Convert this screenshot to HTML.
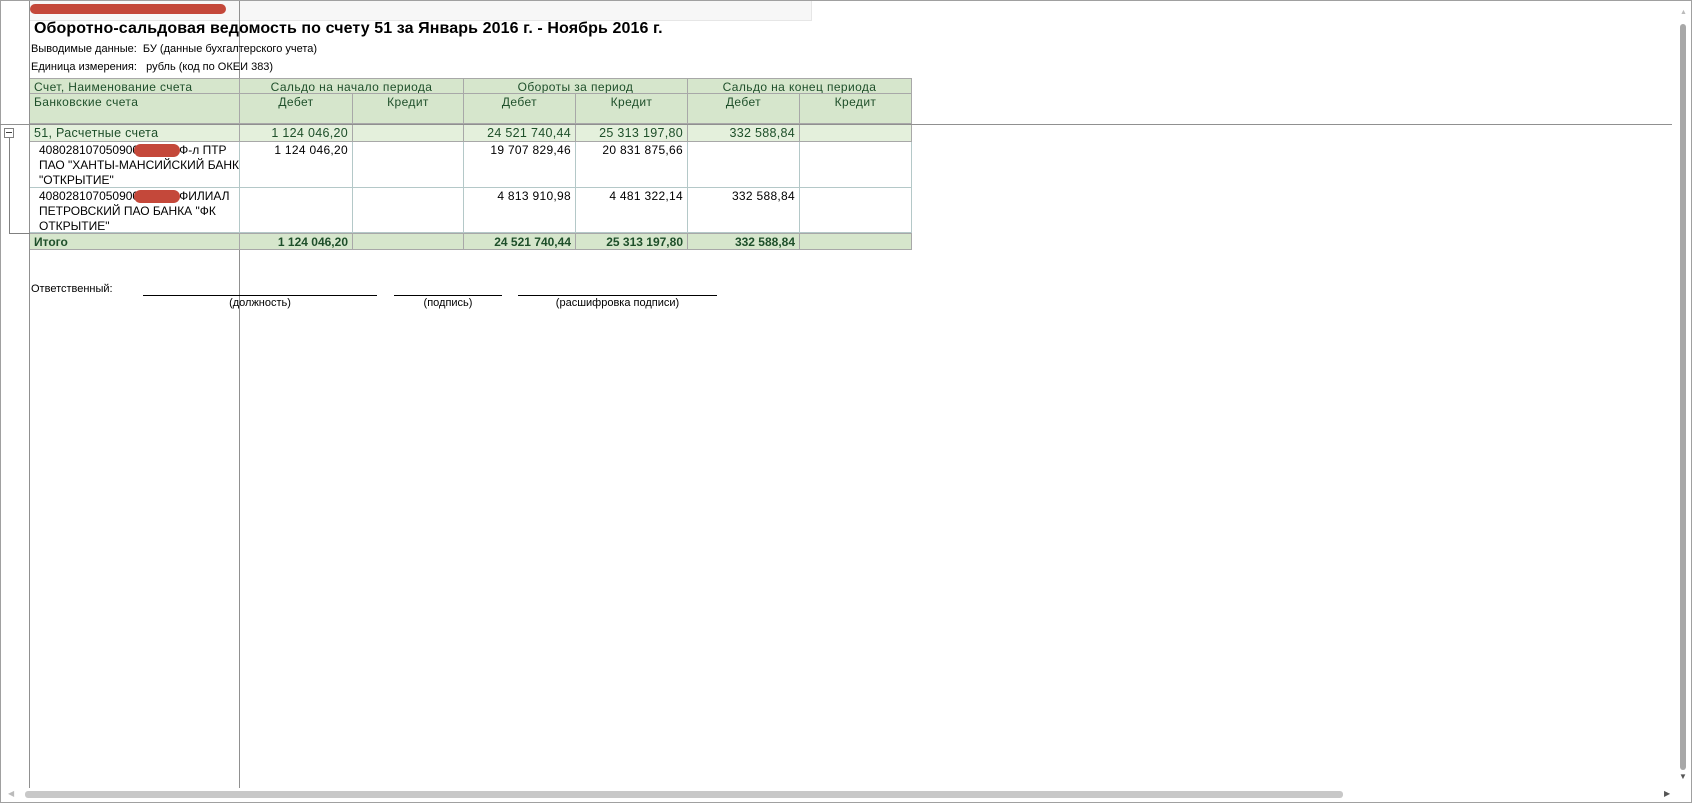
<!DOCTYPE html>
<html><head><meta charset="utf-8"><style>
*{margin:0;padding:0;box-sizing:border-box}
body{width:1692px;height:803px;overflow:hidden;background:#fff;font-family:"Liberation Sans",Arial,sans-serif;font-size:12px;color:#000;position:relative}
.a{position:absolute}
.c{position:absolute;white-space:nowrap;overflow:hidden;line-height:15px;padding:1px 4px}
.h{background:#d6e6cc;color:#1e4f2a;text-align:center;border-right:1px solid #a8a8a8;border-bottom:1px solid #a8a8a8;letter-spacing:0.4px}
.g{background:#e4f0dc;color:#1e4f2a;text-align:right;border-right:1px solid #a8a8a8;border-bottom:1px solid #a8a8a8;font-size:12.5px;letter-spacing:0.3px}
.d{text-align:right;border-right:1px solid #b4c8c8;border-bottom:1px solid #b4c8c8;height:46px;letter-spacing:0.3px}
.t{background:#d6e6cc;color:#1e4f2a;text-align:right;font-weight:bold;border-right:1px solid #a8a8a8;border-bottom:1px solid #a8a8a8;font-size:12px}
</style></head><body>
<div class="a" style="left:0;top:0;width:1692px;height:803px;border:1px solid #a0a0a0"></div>
<div class="a" style="left:29px;top:1px;width:783px;height:20px;background:#f7f7f7;border-bottom:1px solid #e6e6e6;border-right:1px solid #e6e6e6"></div>
<div class="a" style="left:30px;top:4px;width:196px;height:10px;background:#c4483a;border-radius:6px"></div>
<div class="a" style="left:29px;top:1px;width:1px;height:787px;background:#909090"></div>
<div class="a" style="left:239px;top:1px;width:1px;height:787px;background:#909090"></div>
<div class="a" style="left:0;top:124px;width:1672px;height:1px;background:#909090"></div>
<div class="a" style="left:34px;top:19px;font-size:16px;font-weight:bold;line-height:20px;letter-spacing:0.1px">Оборотно-сальдовая ведомость по счету 51 за Январь 2016 г. - Ноябрь 2016 г.</div>
<div class="a" style="left:31px;top:43px;font-size:11px">Выводимые данные:&nbsp; БУ (данные бухгалтерского учета)</div>
<div class="a" style="left:31px;top:61px;font-size:11px">Единица измерения:&nbsp;&nbsp; рубль (код по ОКЕИ 383)</div>

<div class="c h" style="left:30px;top:78px;width:210px;height:16px;text-align:left;border-top:1px solid #a8a8a8">Счет, Наименование счета</div>
<div class="c h" style="left:240px;top:78px;width:224px;height:16px;border-top:1px solid #a8a8a8">Сальдо на начало периода</div>
<div class="c h" style="left:464px;top:78px;width:224px;height:16px;border-top:1px solid #a8a8a8">Обороты за период</div>
<div class="c h" style="left:688px;top:78px;width:224px;height:16px;border-top:1px solid #a8a8a8">Сальдо на конец периода</div>
<div class="c h" style="left:30px;top:94px;width:210px;height:30px;text-align:left">Банковские счета</div>
<div class="c h" style="left:240px;top:94px;width:113px;height:30px">Дебет</div>
<div class="c h" style="left:353px;top:94px;width:111px;height:30px">Кредит</div>
<div class="c h" style="left:464px;top:94px;width:112px;height:30px">Дебет</div>
<div class="c h" style="left:576px;top:94px;width:112px;height:30px">Кредит</div>
<div class="c h" style="left:688px;top:94px;width:112px;height:30px">Дебет</div>
<div class="c h" style="left:800px;top:94px;width:112px;height:30px">Кредит</div>

<div class="c g" style="left:30px;top:125px;width:210px;height:17px;text-align:left">51, Расчетные счета</div>
<div class="c g" style="left:240px;top:125px;width:113px;height:17px">1 124 046,20</div>
<div class="c g" style="left:353px;top:125px;width:111px;height:17px"></div>
<div class="c g" style="left:464px;top:125px;width:112px;height:17px">24 521 740,44</div>
<div class="c g" style="left:576px;top:125px;width:112px;height:17px">25 313 197,80</div>
<div class="c g" style="left:688px;top:125px;width:112px;height:17px">332 588,84</div>
<div class="c g" style="left:800px;top:125px;width:112px;height:17px"></div>

<div class="c d" style="left:30px;top:142px;width:210px;text-align:left;padding-left:9px;letter-spacing:0">40802810705090000000, Ф-л ПТР<br>ПАО "ХАНТЫ-МАНСИЙСКИЙ БАНК<br>"ОТКРЫТИЕ"</div>
<div class="a" style="left:134px;top:144px;width:46px;height:13px;background:#c4483a;border-radius:7px"></div>
<div class="c d" style="left:240px;top:142px;width:113px">1 124 046,20</div>
<div class="c d" style="left:353px;top:142px;width:111px"></div>
<div class="c d" style="left:464px;top:142px;width:112px">19 707 829,46</div>
<div class="c d" style="left:576px;top:142px;width:112px">20 831 875,66</div>
<div class="c d" style="left:688px;top:142px;width:112px"></div>
<div class="c d" style="left:800px;top:142px;width:112px"></div>

<div class="c d" style="left:30px;top:188px;width:210px;height:45px;text-align:left;padding-left:9px;letter-spacing:0">40802810705090000000, ФИЛИАЛ<br>ПЕТРОВСКИЙ ПАО БАНКА "ФК<br>ОТКРЫТИЕ"</div>
<div class="a" style="left:134px;top:190px;width:46px;height:13px;background:#c4483a;border-radius:7px"></div>
<div class="c d" style="left:240px;top:188px;width:113px;height:45px"></div>
<div class="c d" style="left:353px;top:188px;width:111px;height:45px"></div>
<div class="c d" style="left:464px;top:188px;width:112px;height:45px">4 813 910,98</div>
<div class="c d" style="left:576px;top:188px;width:112px;height:45px">4 481 322,14</div>
<div class="c d" style="left:688px;top:188px;width:112px;height:45px">332 588,84</div>
<div class="c d" style="left:800px;top:188px;width:112px;height:45px"></div>

<div class="c t" style="left:30px;top:233px;width:210px;height:17px;text-align:left;border-top:1px solid #a8a8a8">Итого</div>
<div class="c t" style="left:240px;top:233px;width:113px;height:17px;border-top:1px solid #a8a8a8">1 124 046,20</div>
<div class="c t" style="left:353px;top:233px;width:111px;height:17px;border-top:1px solid #a8a8a8"></div>
<div class="c t" style="left:464px;top:233px;width:112px;height:17px;border-top:1px solid #a8a8a8">24 521 740,44</div>
<div class="c t" style="left:576px;top:233px;width:112px;height:17px;border-top:1px solid #a8a8a8">25 313 197,80</div>
<div class="c t" style="left:688px;top:233px;width:112px;height:17px;border-top:1px solid #a8a8a8">332 588,84</div>
<div class="c t" style="left:800px;top:233px;width:112px;height:17px;border-top:1px solid #a8a8a8"></div>

<div class="a" style="left:4px;top:128px;width:10px;height:10px;border:1px solid #808080;background:#fff"></div>
<div class="a" style="left:6px;top:132px;width:6px;height:1px;background:#404040"></div>
<div class="a" style="left:9px;top:138px;width:1px;height:95px;background:#808080"></div>
<div class="a" style="left:9px;top:233px;width:21px;height:1px;background:#808080"></div>

<div class="a" style="left:31px;top:283px;font-size:11px">Ответственный:</div>
<div class="a" style="left:143px;top:295px;width:234px;height:1px;background:#000"></div>
<div class="a" style="left:394px;top:295px;width:108px;height:1px;background:#000"></div>
<div class="a" style="left:518px;top:295px;width:199px;height:1px;background:#000"></div>
<div class="a" style="left:143px;top:297px;width:234px;text-align:center;font-size:11px">(должность)</div>
<div class="a" style="left:394px;top:297px;width:108px;text-align:center;font-size:11px">(подпись)</div>
<div class="a" style="left:518px;top:297px;width:199px;text-align:center;font-size:11px">(расшифровка подписи)</div>

<div class="a" style="left:1680px;top:24px;width:6px;height:746px;background:#a8a8a8;border-radius:3px"></div>
<div class="a" style="left:1680px;top:9px;font-size:7px;color:#bbb">▲</div>
<div class="a" style="left:1679px;top:772px;font-size:8px;color:#555">▼</div>
<div class="a" style="left:25px;top:791px;width:1318px;height:7px;background:#c8c8c8;border-radius:3px"></div>
<div class="a" style="left:8px;top:789px;font-size:8px;color:#bbb">◀</div>
<div class="a" style="left:1664px;top:789px;font-size:8px;color:#555">▶</div>
</body></html>
